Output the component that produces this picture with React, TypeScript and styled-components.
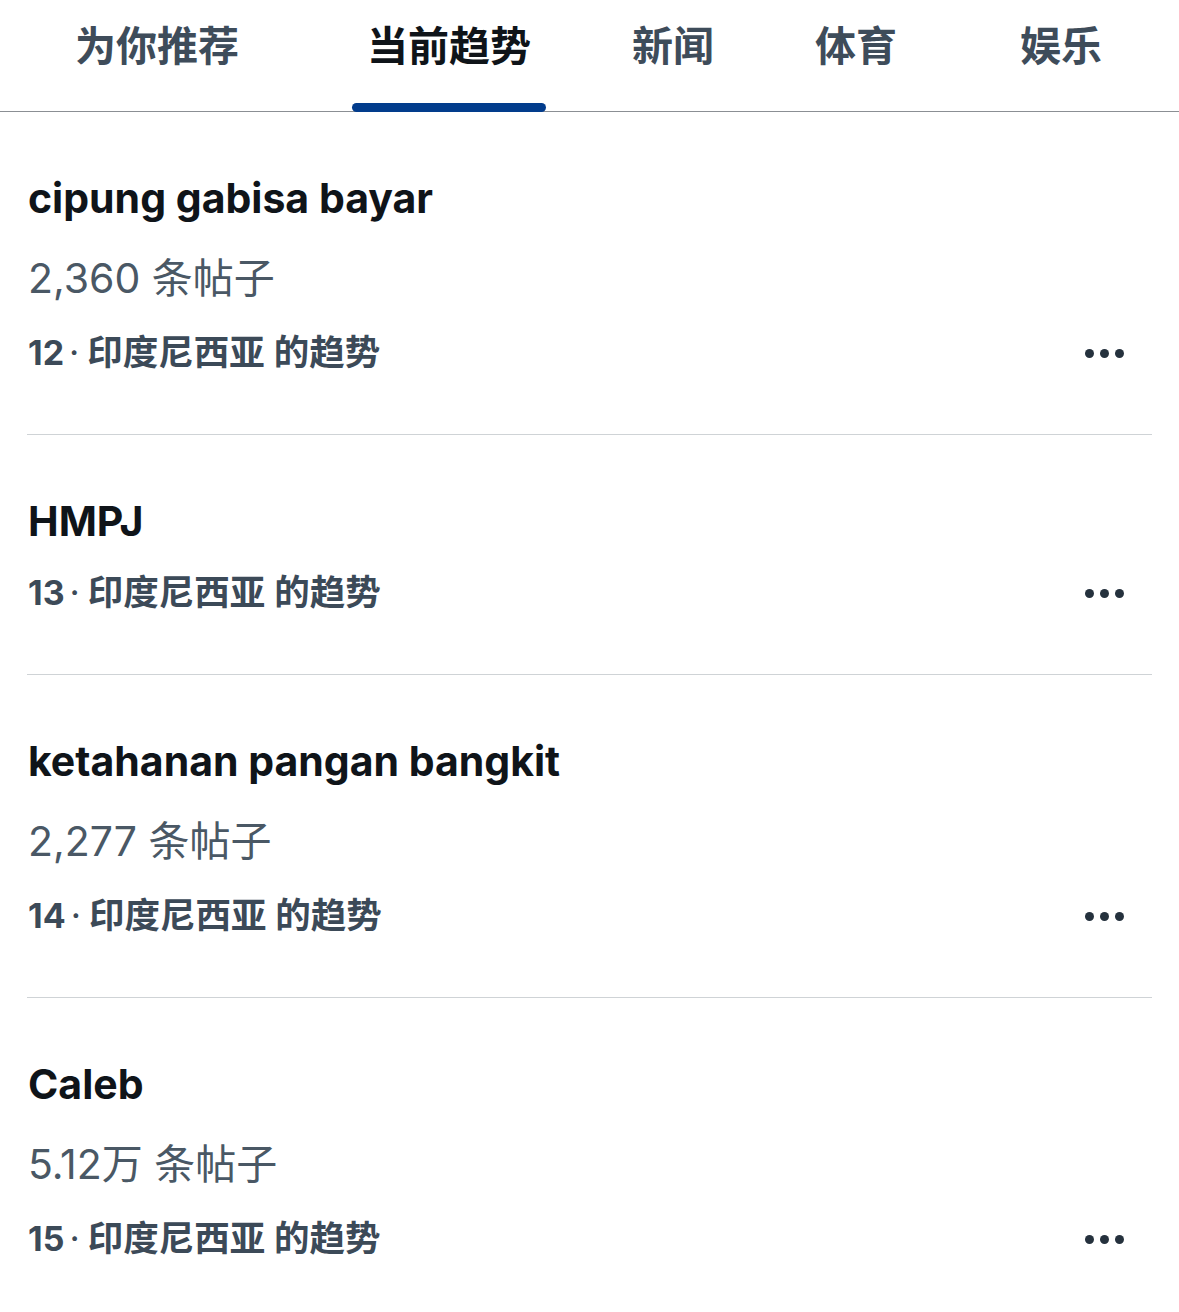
import React from "react";
import styled, { createGlobalStyle } from "styled-components";

const GlobalStyle = createGlobalStyle`
  html, body {
    margin: 0;
    padding: 0;
    background: #ffffff;
  }
  body {
    font-family: "Inter", "Noto Sans CJK SC", sans-serif;
    -webkit-font-smoothing: antialiased;
  }
`;

const Page = styled.div`
  width: 1179px;
  min-height: 1312px;
  background: #ffffff;
  overflow: hidden;
`;

const TabBar = styled.nav`
  display: flex;
  align-items: stretch;
  height: 112px;
  border-bottom: 1px solid #8b8f94;
  box-sizing: border-box;
`;

const Tab = styled.div<{ $offset: number; $active?: boolean }>`
  position: relative;
  margin-left: ${(p) => p.$offset}px;
  padding: 17px 15px 0;
  display: flex;
  align-items: flex-start;
  font-family: "Noto Sans CJK SC", sans-serif;
  font-size: 41px;
  line-height: 52px;
  font-weight: 700;
  color: ${(p) => (p.$active ? "#0f1419" : "#3e4c5a")};
  white-space: nowrap;
`;

const Indicator = styled.span`
  position: absolute;
  left: 0;
  right: 0;
  bottom: -1px;
  height: 9px;
  border-radius: 5px;
  background: #023c8c;
`;

const List = styled.div`
  display: flex;
  flex-direction: column;
`;

const Row = styled.div<{ $last?: boolean }>`
  margin: 0 27px;
  padding: 60px 0 59px 1px;
  border-bottom: ${(p) => (p.$last ? "none" : "1px solid #cfd3d6")};
  display: flex;
  flex-direction: column;
`;

const Title = styled.div`
  font-family: "Inter", "Noto Sans CJK SC", sans-serif;
  font-size: 41px;
  line-height: 52px;
  font-weight: 700;
  color: #0f1419;
`;

const Count = styled.div`
  margin-top: 28px;
  font-family: "Inter", "Noto Sans CJK SC", sans-serif;
  font-size: 41px;
  line-height: 52px;
  font-weight: 400;
  color: #4a5865;
`;

const Meta = styled.div`
  margin-top: 24px;
  ${Count} + & {
    margin-top: 27px;
  }
  display: flex;
  align-items: center;
  justify-content: space-between;
  padding-right: 28px;
  height: 44px;
`;

const MetaText = styled.span`
  font-family: "Inter", "Noto Sans CJK SC", sans-serif;
  font-size: 35.5px;
  line-height: 44px;
  font-weight: 700;
  color: #3c4a58;
`;

const Rank = styled.span`
  font-weight: 700;
  font-size: 34px;
`;

const Place = styled.span`
  font-weight: 600;
`;

const Dot = styled.span`
  font-weight: 400;
  margin: 0 8px 0 5px;
`;

const MoreButton = styled.button`
  border: none;
  background: none;
  padding: 0;
  display: flex;
  align-items: center;
  gap: 6px;
  cursor: pointer;
`;

const MoreDot = styled.span`
  width: 9px;
  height: 9px;
  border-radius: 50%;
  background: #25313d;
`;

type Trend = { title: string; count?: string; rank: number };

const trends: Trend[] = [
  { title: "cipung gabisa bayar", count: "2,360 条帖子", rank: 12 },
  { title: "HMPJ", rank: 13 },
  { title: "ketahanan pangan bangkit", count: "2,277 条帖子", rank: 14 },
  { title: "Caleb", count: "5.12万 条帖子", rank: 15 },
];

const tabs = [
  { label: "为你推荐", offset: 60 },
  { label: "当前趋势", offset: 98, active: true },
  { label: "新闻", offset: 71 },
  { label: "体育", offset: 71 },
  { label: "娱乐", offset: 93 },
];

export default function App() {
  return (
    <Page>
      <GlobalStyle />
      <TabBar>
        {tabs.map((t) => (
          <Tab key={t.label} $offset={t.offset} $active={t.active}>
            {t.label}
            {t.active && <Indicator />}
          </Tab>
        ))}
      </TabBar>
      <List>
        {trends.map((t, i) => (
          <Row key={t.title} $last={i === trends.length - 1}>
            <Title>{t.title}</Title>
            {t.count && <Count>{t.count}</Count>}
            <Meta>
              <MetaText>
                <Rank>{t.rank}</Rank>
                <Dot>·</Dot>
                <Place>印度尼西亚 的趋势</Place>
              </MetaText>
              <MoreButton aria-label="更多">
                <MoreDot />
                <MoreDot />
                <MoreDot />
              </MoreButton>
            </Meta>
          </Row>
        ))}
      </List>
    </Page>
  );
}
